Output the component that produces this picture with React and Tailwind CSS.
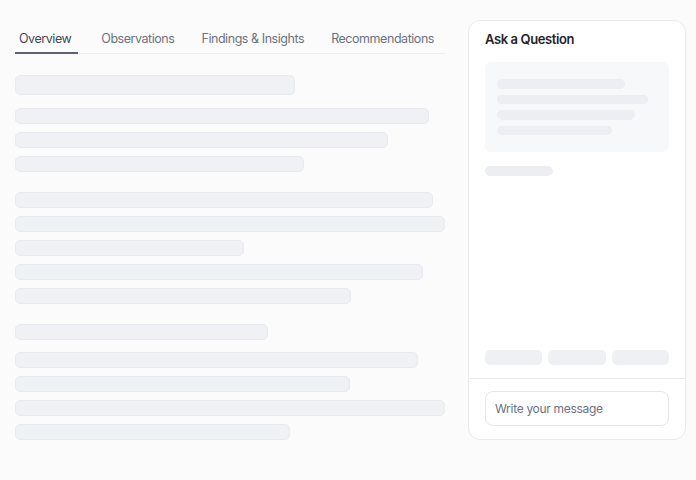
import React from "react";

const Bar = ({ w, h = "h-4" }) => (
  <div
    className={`${h} rounded-[5px] bg-[#f0f1f4] border border-[#e9eaef]`}
    style={{ width: w }}
  />
);

export default function App() {
  const group1 = [414, 373, 289];
  const group2 = [418, 430, 229, 408, 336];
  const group3 = [403, 335, 430, 275];
  return (
    <div
      className="w-[696px] h-[480px] bg-[#fbfbfc] flex gap-[23px] pl-[15px] pt-[20px]"
      style={{ fontFamily: "Inter, 'Noto Sans', sans-serif" }}
    >
      <div className="w-[430px] pt-[9px] flex flex-col">
        <div className="flex gap-[19px] border-b border-[#eceef0] text-[12.5px] leading-5 tracking-[-0.45px] whitespace-nowrap">
          <div className="pl-1 pr-[7px] pb-[3px] -mb-px border-b-2 border-[#5b6372] text-[#3f4856]">Overview</div>
          <div className="px-1 pb-[3px] text-[#6b7280]">Observations</div>
          <div className="px-1 pb-[3px] text-[#6b7280]">Findings &amp; Insights</div>
          <div className="px-1 pb-[3px] text-[#6b7280]">Recommendations</div>
        </div>
        <div className="mt-[21px]">
          <Bar w={280} h="h-5" />
        </div>
        <div className="mt-[13px] flex flex-col gap-2">
          {group1.map((w, i) => (
            <Bar key={i} w={w} />
          ))}
        </div>
        <div className="mt-5 flex flex-col gap-2">
          {group2.map((w, i) => (
            <Bar key={i} w={w} />
          ))}
        </div>
        <div className="mt-5">
          <Bar w={253} />
        </div>
        <div className="mt-3 flex flex-col gap-2">
          {group3.map((w, i) => (
            <Bar key={i} w={w} />
          ))}
        </div>
      </div>
      <div className="w-[218px] h-[420px] bg-white border border-[#e8eaee] rounded-xl flex flex-col">
        <div className="px-4 pt-[8px] flex-1 flex flex-col">
          <div className="text-[13px] leading-5 font-semibold tracking-[-0.4px] text-[#1f2328]">Ask a Question</div>
          <div className="mt-[13px] h-[90px] rounded-md bg-[#f7f8fa] px-3 py-[17px] flex flex-col gap-[6px]">
            <div className="h-[10px] w-[128px] rounded-full bg-[#eceef1]" />
            <div className="h-[10px] w-[151px] rounded-full bg-[#eceef1]" />
            <div className="h-[10px] w-[138px] rounded-full bg-[#eceef1]" />
            <div className="h-[10px] w-[115px] rounded-full bg-[#eceef1]" />
          </div>
          <div className="mt-[14px] h-[10px] w-[68px] rounded-full bg-[#eceef1]" />
          <div className="mt-auto mb-[13px] flex gap-1.5">
            <div className="flex-1 h-[15px] rounded-[5px] bg-[#eff0f3]" />
            <div className="flex-1 h-[15px] rounded-[5px] bg-[#eff0f3]" />
            <div className="flex-1 h-[15px] rounded-[5px] bg-[#eff0f3]" />
          </div>
        </div>
        <div className="border-t border-[#e8eaee] px-4 pt-3 pb-[13px]">
          <div className="h-[35px] rounded-lg border border-[#e5e7eb] px-[9px] flex items-center text-[12px] tracking-[-0.3px] text-[#6b7280]">
            Write your message
          </div>
        </div>
      </div>
    </div>
  );
}
